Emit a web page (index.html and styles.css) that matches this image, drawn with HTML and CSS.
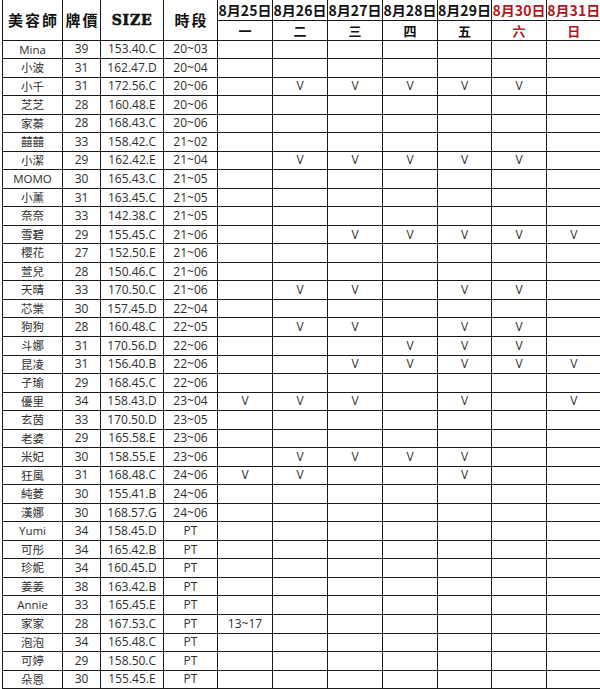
FILE: index.html
```html
<!DOCTYPE html>
<html lang="zh-Hant">
<head>
<meta charset="utf-8">
<title>排班表</title>
<link rel="stylesheet" href="styles.css">
</head>
<body>
<table class="sheet">
  <colgroup>
    <col class="c-name"><col class="c-price"><col class="c-size"><col class="c-time">
    <col class="c-day"><col class="c-day"><col class="c-day"><col class="c-day"><col class="c-day5"><col class="c-day"><col class="c-day7">
  </colgroup>
  <thead>
    <tr class="h-date">
      <th rowspan="2" class="hd hd-cjk">美容師</th>
      <th rowspan="2" class="hd hd-cjk">牌價</th>
      <th rowspan="2" class="hd hd-size">SIZE</th>
      <th rowspan="2" class="hd hd-cjk">時段</th>
      <th class="date"><div class="fit">8月25日</div></th>
      <th class="date"><div class="fit">8月26日</div></th>
      <th class="date"><div class="fit">8月27日</div></th>
      <th class="date"><div class="fit">8月28日</div></th>
      <th class="date"><div class="fit">8月29日</div></th>
      <th class="date red"><div class="fit">8月30日</div></th>
      <th class="date red last"><div class="fit">8月31日</div></th>
    </tr>
    <tr class="h-wd">
      <th class="wd">一</th>
      <th class="wd">二</th>
      <th class="wd">三</th>
      <th class="wd">四</th>
      <th class="wd">五</th>
      <th class="wd red">六</th>
      <th class="wd red last">日</th>
    </tr>
  </thead>
  <tbody>
    <tr><td class="nm">Mina</td><td>39</td><td>153.40.C</td><td>20~03</td><td></td><td></td><td></td><td></td><td></td><td></td><td class="last"></td></tr>
    <tr><td class="nm">小波</td><td>31</td><td>162.47.D</td><td>20~04</td><td></td><td></td><td></td><td></td><td></td><td></td><td class="last"></td></tr>
    <tr><td class="nm">小千</td><td>31</td><td>172.56.C</td><td>20~06</td><td></td><td>V</td><td>V</td><td>V</td><td>V</td><td>V</td><td class="last"></td></tr>
    <tr><td class="nm">芝芝</td><td>28</td><td>160.48.E</td><td>20~06</td><td></td><td></td><td></td><td></td><td></td><td></td><td class="last"></td></tr>
    <tr><td class="nm">家蓁</td><td>28</td><td>168.43.C</td><td>20~06</td><td></td><td></td><td></td><td></td><td></td><td></td><td class="last"></td></tr>
    <tr><td class="nm">囍囍</td><td>33</td><td>158.42.C</td><td>21~02</td><td></td><td></td><td></td><td></td><td></td><td></td><td class="last"></td></tr>
    <tr><td class="nm">小潔</td><td>29</td><td>162.42.E</td><td>21~04</td><td></td><td>V</td><td>V</td><td>V</td><td>V</td><td>V</td><td class="last"></td></tr>
    <tr><td class="nm">MOMO</td><td>30</td><td>165.43.C</td><td>21~05</td><td></td><td></td><td></td><td></td><td></td><td></td><td class="last"></td></tr>
    <tr><td class="nm">小薰</td><td>31</td><td>163.45.C</td><td>21~05</td><td></td><td></td><td></td><td></td><td></td><td></td><td class="last"></td></tr>
    <tr><td class="nm">奈奈</td><td>33</td><td>142.38.C</td><td>21~05</td><td></td><td></td><td></td><td></td><td></td><td></td><td class="last"></td></tr>
    <tr><td class="nm">雪碧</td><td>29</td><td>155.45.C</td><td>21~06</td><td></td><td></td><td>V</td><td>V</td><td>V</td><td>V</td><td class="last">V</td></tr>
    <tr><td class="nm">櫻花</td><td>27</td><td>152.50.E</td><td>21~06</td><td></td><td></td><td></td><td></td><td></td><td></td><td class="last"></td></tr>
    <tr><td class="nm">萱兒</td><td>28</td><td>150.46.C</td><td>21~06</td><td></td><td></td><td></td><td></td><td></td><td></td><td class="last"></td></tr>
    <tr><td class="nm">天晴</td><td>33</td><td>170.50.C</td><td>21~06</td><td></td><td>V</td><td>V</td><td></td><td>V</td><td>V</td><td class="last"></td></tr>
    <tr><td class="nm">芯棠</td><td>30</td><td>157.45.D</td><td>22~04</td><td></td><td></td><td></td><td></td><td></td><td></td><td class="last"></td></tr>
    <tr><td class="nm">狗狗</td><td>28</td><td>160.48.C</td><td>22~05</td><td></td><td>V</td><td>V</td><td></td><td>V</td><td>V</td><td class="last"></td></tr>
    <tr><td class="nm">斗娜</td><td>31</td><td>170.56.D</td><td>22~06</td><td></td><td></td><td></td><td>V</td><td>V</td><td>V</td><td class="last"></td></tr>
    <tr><td class="nm">昆凌</td><td>31</td><td>156.40.B</td><td>22~06</td><td></td><td></td><td>V</td><td>V</td><td>V</td><td>V</td><td class="last">V</td></tr>
    <tr><td class="nm">子瑜</td><td>29</td><td>168.45.C</td><td>22~06</td><td></td><td></td><td></td><td></td><td></td><td></td><td class="last"></td></tr>
    <tr><td class="nm">優里</td><td>34</td><td>158.43.D</td><td>23~04</td><td>V</td><td>V</td><td>V</td><td></td><td>V</td><td></td><td class="last">V</td></tr>
    <tr><td class="nm">玄茵</td><td>33</td><td>170.50.D</td><td>23~05</td><td></td><td></td><td></td><td></td><td></td><td></td><td class="last"></td></tr>
    <tr><td class="nm">老婆</td><td>29</td><td>165.58.E</td><td>23~06</td><td></td><td></td><td></td><td></td><td></td><td></td><td class="last"></td></tr>
    <tr><td class="nm">米妃</td><td>30</td><td>158.55.E</td><td>23~06</td><td></td><td>V</td><td>V</td><td>V</td><td>V</td><td></td><td class="last"></td></tr>
    <tr><td class="nm">狂風</td><td>31</td><td>168.48.C</td><td>24~06</td><td>V</td><td>V</td><td></td><td></td><td>V</td><td></td><td class="last"></td></tr>
    <tr><td class="nm">純菱</td><td>30</td><td>155.41.B</td><td>24~06</td><td></td><td></td><td></td><td></td><td></td><td></td><td class="last"></td></tr>
    <tr><td class="nm">漢娜</td><td>30</td><td>168.57.G</td><td>24~06</td><td></td><td></td><td></td><td></td><td></td><td></td><td class="last"></td></tr>
    <tr><td class="nm">Yumi</td><td>34</td><td>158.45.D</td><td>PT</td><td></td><td></td><td></td><td></td><td></td><td></td><td class="last"></td></tr>
    <tr><td class="nm">可彤</td><td>34</td><td>165.42.B</td><td>PT</td><td></td><td></td><td></td><td></td><td></td><td></td><td class="last"></td></tr>
    <tr><td class="nm">珍妮</td><td>34</td><td>160.45.D</td><td>PT</td><td></td><td></td><td></td><td></td><td></td><td></td><td class="last"></td></tr>
    <tr><td class="nm">姜姜</td><td>38</td><td>163.42.B</td><td>PT</td><td></td><td></td><td></td><td></td><td></td><td></td><td class="last"></td></tr>
    <tr><td class="nm">Annie</td><td>33</td><td>165.45.E</td><td>PT</td><td></td><td></td><td></td><td></td><td></td><td></td><td class="last"></td></tr>
    <tr><td class="nm">家家</td><td>28</td><td>167.53.C</td><td>PT</td><td>13~17</td><td></td><td></td><td></td><td></td><td></td><td class="last"></td></tr>
    <tr><td class="nm">泡泡</td><td>34</td><td>165.48.C</td><td>PT</td><td></td><td></td><td></td><td></td><td></td><td></td><td class="last"></td></tr>
    <tr><td class="nm">可婷</td><td>29</td><td>158.50.C</td><td>PT</td><td></td><td></td><td></td><td></td><td></td><td></td><td class="last"></td></tr>
    <tr><td class="nm">朵恩</td><td>30</td><td>155.45.E</td><td>PT</td><td></td><td></td><td></td><td></td><td></td><td></td><td class="last"></td></tr>
  </tbody>
</table>
</body>
</html>
```

FILE: styles.css
```css
html, body {
  margin: 0;
  padding: 0;
  background: #ffffff;
}

body {
  padding-left: 2px;
  width: 598px;
  height: 689px;
  overflow: hidden;
}

.sheet {
  border-collapse: collapse;
  table-layout: fixed;
  width: 598px;
  font-family: "Open Sans", "Noto Sans CJK TC", sans-serif;
  font-size: 12px;
  color: #2e2e2e;
}

.c-name { width: 60px; }
.c-price { width: 38px; }
.c-size { width: 63px; }
.c-time { width: 54px; }
.c-day { width: 55px; }
.c-day5 { width: 54px; }
.c-day7 { width: 54px; }

.sheet th,
.sheet td {
  border: 1px solid #1a1a1a;
  padding: 0;
  text-align: center;
  vertical-align: middle;
  white-space: nowrap;
  overflow: hidden;
  line-height: 1;
}

.sheet .last {
  border-right: none;
}

.sheet thead tr:first-child th {
  border-top: none;
}

.h-date { height: 20px; }
.h-wd { height: 20px; }

.hd {
  color: #111;
  font-weight: 700;
  padding-top: 3px;
}

.hd-cjk {
  font-family: "Noto Sans CJK TC", sans-serif;
  font-size: 15px;
  letter-spacing: 2px;
  text-indent: 2px;
}

.hd-size {
  font-family: "DejaVu Serif", serif;
  font-size: 14px;
  font-weight: 700;
  letter-spacing: 0.8px;
  -webkit-text-stroke: 0.6px #111;
}

.date {
  font-family: "Noto Sans CJK TC", sans-serif;
  font-size: 14px;
  font-weight: 700;
  color: #111;
}

.fit {
  display: flex;
  justify-content: center;
  width: 100%;
  overflow: hidden;
  white-space: nowrap;
}

.wd {
  font-family: "Noto Sans CJK TC", sans-serif;
  font-size: 13px;
  font-weight: 700;
  color: #111;
}

.sheet .red {
  color: #b0161c;
}

.sheet tbody tr {
  height: 18.54px;
}

.sheet tbody td {
  font-size: 12px;
}

.sheet tbody td.nm {
  font-size: 11.5px;
}
```
